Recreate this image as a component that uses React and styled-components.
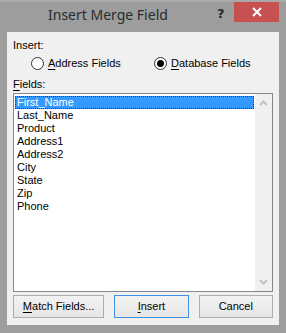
import React from 'react';
import styled, { createGlobalStyle } from 'styled-components';

const GlobalStyle = createGlobalStyle`
  html, body {
    margin: 0;
    padding: 0;
    background: #9d9d9d;
  }
  body {
    font-family: "Noto Sans", "Open Sans", sans-serif;
  }
`;

const Window = styled.div`
  width: 286px;
  height: 333px;
  display: flex;
  flex-direction: column;
  background: #9d9d9d;
  border-top: 2px solid #a9a9a9;
  box-sizing: border-box;
`;

const TitleBar = styled.div`
  height: 30px;
  display: flex;
  align-items: flex-start;
`;

const Title = styled.div`
  padding-left: 48px;
  padding-top: 3px;
  font-size: 14px;
  line-height: 20px;
  color: #2b2b2b;
  flex: 1;
`;

const Help = styled.div`
  width: 14px;
  margin-top: 4px;
  font-family: "DejaVu Sans", sans-serif;
  font-weight: bold;
  font-size: 13px;
  color: #2a2a2a;
`;

const Close = styled.div`
  width: 45px;
  height: 20px;
  margin: 0 7px 0 3px;
  background: #c75050;
  display: flex;
  align-items: center;
  justify-content: center;
`;

const Client = styled.div`
  flex: 1;
  margin: 0 7px 8px 7px;
  background: #f0f0f0;
  padding: 4px 6px 7px 6px;
  display: flex;
  flex-direction: column;
  font-family: "Liberation Sans", Arial, sans-serif;
  font-size: 11px;
  color: #000;
`;

const Label = styled.div`
  line-height: 15px;
  margin-top: ${(p) => p.$top || 0}px;
`;

const RadioRow = styled.div`
  display: flex;
  align-items: center;
  height: 16px;
  margin-top: 2px;
  padding-left: 18px;
`;

const RadioItem = styled.label`
  display: flex;
  align-items: center;
  gap: 4px;
  width: ${(p) => p.$width}px;
`;

const RadioCircle = styled.span`
  width: 11px;
  height: 11px;
  border-radius: 50%;
  border: 1px solid #333;
  background: #fff;
  display: flex;
  align-items: center;
  justify-content: center;
  &::after {
    content: '';
    display: ${(p) => (p.$checked ? 'block' : 'none')};
    width: 7px;
    height: 7px;
    border-radius: 50%;
    background: #000;
  }
`;

const U = styled.span`
  text-decoration: underline;
  text-underline-offset: 2px;
`;

const ListBox = styled.div`
  margin-top: 1px;
  height: 199px;
  box-sizing: border-box;
  border: 1px solid #828790;
  background: #fff;
  display: flex;
`;

const Items = styled.div`
  flex: 1;
  padding: 2px 1px 0 1px;
`;

const Item = styled.div`
  height: 13px;
  line-height: 13px;
  padding-left: 2px;
  box-sizing: border-box;
  background: ${(p) => (p.$selected ? '#3399ff' : 'transparent')};
  color: ${(p) => (p.$selected ? '#fff' : '#000')};
  outline: ${(p) => (p.$selected ? '1px dotted #1b3f7a' : 'none')};
  outline-offset: -1px;
`;

const ScrollBar = styled.div`
  width: 17px;
  background: #f0f0f0;
  display: flex;
  flex-direction: column;
  justify-content: space-between;
  align-items: center;
  padding: 6px 0 6px;
`;

const Buttons = styled.div`
  margin-top: 3px;
  display: flex;
  gap: 10px;
`;

const Button = styled.div`
  width: ${(p) => p.$width}px;
  height: 23px;
  box-sizing: border-box;
  border: 1px solid ${(p) => (p.$default ? '#3c93e6' : '#adadad')};
  background: linear-gradient(#f2f2f2, #e6e6e6);
  display: flex;
  align-items: center;
  justify-content: center;
  line-height: 15px;
`;

const Chevron = ({ up }) => (
  <svg width="9" height="6" viewBox="0 0 9 6">
    <path
      d={up ? 'M1 5 L4.5 1.5 L8 5' : 'M1 1 L4.5 4.5 L8 1'}
      fill="none"
      stroke="#c2c2c2"
      strokeWidth="2"
    />
  </svg>
);

const fields = [
  'First_Name',
  'Last_Name',
  'Product',
  'Address1',
  'Address2',
  'City',
  'State',
  'Zip',
  'Phone',
];

export default function App() {
  return (
    <React.Fragment>
      <GlobalStyle />
      <Window>
        <TitleBar>
          <Title>Insert Merge Field</Title>
          <Help>?</Help>
          <Close>
            <svg width="10" height="10" viewBox="0 0 10 10">
              <path d="M1 1 L9 9 M9 1 L1 9" stroke="#fff" strokeWidth="2" />
            </svg>
          </Close>
        </TitleBar>
        <Client>
          <Label $top={2}>Insert:</Label>
          <RadioRow>
            <RadioItem $width={123}>
              <RadioCircle />
              <span><U>A</U>ddress Fields</span>
            </RadioItem>
            <RadioItem>
              <RadioCircle $checked />
              <span><U>D</U>atabase Fields</span>
            </RadioItem>
          </RadioRow>
          <Label $top={6}><U>F</U>ields:</Label>
          <ListBox>
            <Items>
              {fields.map((f, i) => (
                <Item key={f} $selected={i === 0}>{f}</Item>
              ))}
            </Items>
            <ScrollBar>
              <Chevron up />
              <Chevron />
            </ScrollBar>
          </ListBox>
          <Buttons>
            <Button $width={92}><span><U>M</U>atch Fields...</span></Button>
            <Button $width={75} $default><span><U>I</U>nsert</span></Button>
            <Button $width={75}>Cancel</Button>
          </Buttons>
        </Client>
      </Window>
    </React.Fragment>
  );
}
